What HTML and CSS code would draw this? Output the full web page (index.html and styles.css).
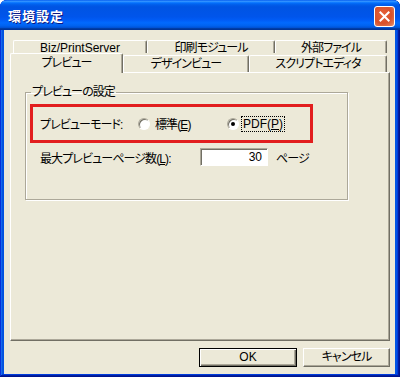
FILE: index.html
```html
<!DOCTYPE html>
<html lang="ja">
<head>
<meta charset="utf-8">
<title>環境設定</title>
<link rel="stylesheet" href="styles.css">
</head>
<body>
<div class="window">
  <div class="titlebar">
    <span class="title">環境設定</span>
    <span class="close" aria-label="閉じる">
      <svg width="21" height="21" viewBox="0 0 21 21"><path d="M6 6 L15 15 M15 6 L6 15" stroke="#fff" stroke-width="2.2" stroke-linecap="square" fill="none"/></svg>
    </span>
  </div>
  <div class="client">
    <div class="tabrow back">
      <div class="tab t-biz en">Biz/PrintServer</div>
      <div class="tab t-print">印刷モジュール</div>
      <div class="tab t-ext">外部ファイル</div>
    </div>
    <div class="tabrow front">
      <div class="tab t-prev selected">プレビュー</div>
      <div class="tab t-design">デザインビュー</div>
      <div class="tab t-script">スクリプトエディタ</div>
    </div>
    <div class="panel">
      <fieldset class="group">
        <legend>プレビューの設定</legend>
        <div class="mode-row">
          <span class="label mode-label">プレビューモード:</span>
          <span class="option opt1"><span class="radio"></span><span>標準(<u>E</u>)</span></span>
          <span class="option opt2"><span class="radio checked"></span><span class="focus en">PDF(<u>P</u>)</span></span>
        </div>
        <div class="pages-row">
          <span class="label pages-label">最大プレビューページ数(<u>L</u>):</span>
          <span class="input en">30</span>
          <span class="unit">ページ</span>
        </div>
      </fieldset>
    </div>
    <div class="buttons">
      <span class="btn ok en">OK</span>
      <span class="btn cancel">キャンセル</span>
    </div>
  </div>
</div>
</body>
</html>
```
FILE: styles.css
```css
html, body {
  margin: 0;
  padding: 0;
  background: #fff;
}
body {
  font-family: "Liberation Sans", "Noto Sans CJK JP", sans-serif;
  font-size: 12px;
  font-feature-settings: "palt";
  letter-spacing: -0.9px;
  color: #000;
}
.en {
  letter-spacing: 0;
}
.window {
  width: 400px;
  height: 377px;
  box-sizing: border-box;
  padding: 0 5px 3px 4px;
  background: #0054E3;
  border-radius: 7px 7px 0 0;
  box-shadow: inset -1px -1px #00138c, inset 1px 1px #0831d9, inset -2px -2px #001ea0, inset 2px 2px #166aee, inset -3px -3px #003bda, inset 3px 3px #0855dd;
  display: flex;
  flex-direction: column;
}
.titlebar {
  height: 30px;
  margin: 0 -5px 0 -4px;
  padding: 0 5px 0 8px;
  border-radius: 7px 7px 0 0;
  background: linear-gradient(to bottom, #0058EE 0%, #3593FF 4%, #288EFF 6%, #127DFF 8%, #036FFC 10%, #0262EE 14%, #0057E5 20%, #0054E3 24%, #0055EB 56%, #005BF5 66%, #026AFE 76%, #0062EF 86%, #0052D6 92%, #0040AB 94%, #003092 100%);
  display: flex;
  align-items: center;
  justify-content: space-between;
}
.title {
  color: #fff;
  font-weight: bold;
  font-size: 13px;
  letter-spacing: 1px;
  text-shadow: 1px 1px #0A1883;
  margin-top: 1px;
}
.close {
  width: 19px;
  height: 19px;
  border: 1px solid #fff;
  border-radius: 3px;
  background: radial-gradient(circle at 40% 40%, #E8623A 0%, #D9512A 55%, #E07A55 85%, #F2B49B 100%);
  display: flex;
  align-items: center;
  justify-content: center;
  margin-top: 2px;
}
.close svg { width: 19px; height: 19px; }
.client {
  flex: 1;
  background: #ECE9D8;
  padding: 10px 5px 0 6px;
  display: flex;
  flex-direction: column;
}
.tabrow {
  display: flex;
}
.tabrow.back {
  height: 13px;
  padding-left: 3px;
}
.tabrow.front {
  height: 19px;
}
.tab {
  box-sizing: border-box;
  border-top: 1px solid #fff;
  border-left: 1px solid #fff;
  border-right: 1px solid #716F64;
  box-shadow: inset -1px 0 #ACA899;
  border-radius: 2px 2px 0 0;
  text-align: center;
  background: #ECE9D8;
}
.back .tab {
  height: 13px;
  line-height: 14px;
}
.front .tab {
  height: 17px;
  margin-top: 2px;
  line-height: 17px;
}
.front .tab.selected {
  height: 20px;
  margin-top: 0;
  line-height: 18px;
  position: relative;
  z-index: 1;
}
.t-biz { width: 134px; }
.t-print { width: 128px; }
.t-ext { width: 112px; }
.t-prev { width: 113px; }
.t-design { width: 126px; }
.t-script { width: 138px; }
.panel {
  height: 269px;
  box-sizing: border-box;
  border-top: 1px solid #fff;
  border-left: 1px solid #fff;
  border-right: 1px solid #716F64;
  border-bottom: 1px solid #716F64;
  box-shadow: inset -1px -1px #ACA899;
  padding: 12px 0 0 14px;
}
.group {
  margin: 0;
  width: 323px;
  height: 115px;
  box-sizing: border-box;
  border: 1px solid #ACA899;
  box-shadow: inset 1px 1px #fff, 1px 1px #fff;
  padding: 5px 0 0 4px;
}
.group legend {
  padding: 0 1px;
  margin-left: 1px;
  line-height: 14px;
}
.mode-row {
  width: 283px;
  height: 39px;
  box-sizing: border-box;
  border: 3px solid #E21E1E;
  display: flex;
  align-items: center;
  padding-left: 7px;
}
.mode-label { width: 98px; }
.option {
  display: flex;
  align-items: center;
}
.opt1 { width: 89px; gap: 5px; }
.opt2 { gap: 3px; }
.radio {
  width: 12px;
  height: 12px;
  box-sizing: border-box;
  border-radius: 50%;
  border: 1px solid;
  border-color: #ACA899 #fff #fff #ACA899;
  box-shadow: inset 1px 1px #716F64;
  background: #fff;
  display: flex;
  align-items: center;
  justify-content: center;
}
.radio.checked::after {
  content: "";
  width: 4px;
  height: 4px;
  border-radius: 50%;
  background: #000;
}
.focus {
  outline: 1px dotted #000;
  padding: 0 1px;
  line-height: 14px;
}
.pages-row {
  display: flex;
  align-items: center;
  margin-top: 5px;
  padding-left: 10px;
  height: 18px;
}
.pages-label { width: 160px; }
.input {
  width: 68px;
  height: 18px;
  box-sizing: border-box;
  background: #fff;
  border: 1px solid;
  border-color: #ACA899 #fff #fff #ACA899;
  box-shadow: inset 1px 1px #716F64;
  text-align: right;
  padding-right: 5px;
  line-height: 16px;
}
.unit { margin-left: 8px; }
.buttons {
  display: flex;
  justify-content: flex-end;
  gap: 6px;
  margin-top: 7px;
}
.btn {
  height: 19px;
  box-sizing: border-box;
  text-align: center;
  line-height: 17px;
  background: #ECE9D8;
  border: 1px solid;
  border-color: #fff #716F64 #716F64 #fff;
  box-shadow: inset -1px -1px #ACA899;
}
.btn.ok {
  width: 98px;
  border-color: #000;
  box-shadow: inset 1px 1px #fff, inset -1px -1px #716F64, inset -2px -2px #ACA899;
}
.btn.cancel { width: 87px; }
```
